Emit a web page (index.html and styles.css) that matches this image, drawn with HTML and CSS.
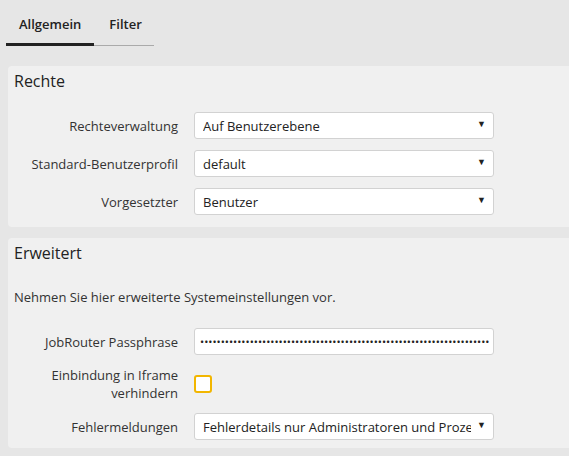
FILE: index.html
```html
<!DOCTYPE html>
<html lang="de">
<head>
    <meta charset="UTF-8">
    <title>Systemeinstellungen</title>
    <link rel="stylesheet" href="styles.css">
</head>
<body>

<div class="tabs">
    <div class="tab active">Allgemein</div>
    <div class="tab">Filter</div>
</div>

<div class="content">
    <!-- Rechte -->
    <div class="panel">
        <h3>Rechte</h3>
        <div class="rows">
            <label class="label" for="rights">Rechteverwaltung</label>
            <div class="select-wrap">
                <select id="rights">
                    <option>Auf Benutzerebene</option>
                    <option>Auf Rollenebene</option>
                </select>
            </div>

            <label class="label" for="profile">Standard-Benutzerprofil</label>
            <div class="select-wrap">
                <select id="profile">
                    <option>default</option>
                </select>
            </div>

            <label class="label" for="boss">Vorgesetzter</label>
            <div class="select-wrap">
                <select id="boss">
                    <option>Benutzer</option>
                </select>
            </div>
        </div>
    </div>

    <!-- Erweitert -->
    <div class="panel">
        <h3>Erweitert</h3>
        <p class="intro">Nehmen Sie hier erweiterte Systemeinstellungen vor.</p>
        <div class="rows">
            <label class="label" for="pass">JobRouter Passphrase</label>
            <input type="password" id="pass" value="xxxxxxxxxxxxxxxxxxxxxxxxxxxxxxxxxxxxxxxxxxxxxxxxxxxxxxxxxxxxxxxxxxxxxxxxxxxxxxxxxxxx">

            <label class="label" for="iframe">Einbindung in Iframe verhindern</label>
            <div class="check-cell">
                <input type="checkbox" id="iframe" class="check">
            </div>

            <label class="label" for="errors">Fehlermeldungen</label>
            <div class="select-wrap">
                <select id="errors">
                    <option>Fehlerdetails nur Administratoren und Prozessverantwortlichen anzeigen</option>
                </select>
            </div>
        </div>
    </div>
</div>

</body>
</html>
```

FILE: styles.css
```css
/* General Styling */
html {
    overflow: hidden;
}
body {
    font-family: 'Open Sans', sans-serif;
    font-size: 13px;
    line-height: 18px;
    background-color: #e6e6e6;
    margin: 0;
    padding: 0;
    color: #333;
}

/* Tabs */
.tabs {
    display: flex;
    align-items: flex-end;
    padding: 0 0 0 6px;
}
.tab {
    padding: 15px 13px 12px;
    font-weight: 600;
    color: #222;
    border-bottom: 1px solid #aaa;
}
.tab + .tab {
    padding-left: 15px;
    padding-right: 12px;
}
.tab.active {
    border-bottom: 3px solid #222;
    padding-bottom: 10px;
}

/* Panels */
.content {
    margin: 20px -20px 0 8px;
}
.panel {
    background-color: #f0f0f0;
    border-radius: 4px;
    padding: 4px 6px 12px;
    margin-bottom: 11px;
}
.panel + .panel {
    padding-bottom: 8px;
}
h3 {
    margin: 0;
    font-size: 16px;
    line-height: 22px;
    font-weight: normal;
    color: #222;
}
.intro {
    margin: 24px 0 22px;
}
.panel h3 + .rows {
    margin-top: 20px;
}

/* Form rows */
.rows {
    display: grid;
    grid-template-columns: 164px 300px;
    column-gap: 16px;
    row-gap: 11px;
    align-items: center;
}
.label {
    text-align: right;
}
select, input[type="password"] {
    display: block;
    width: 100%;
    height: 27px;
    box-sizing: border-box;
    margin: 0;
    border: 1px solid #d2d2d2;
    border-radius: 3px;
    background-color: #fff;
    font-family: 'Open Sans', sans-serif;
    font-size: 13px;
    color: #222;
}
select {
    appearance: none;
    -webkit-appearance: none;
    padding: 0 22px 0 8px;
}
input[type="password"] {
    padding: 0 4px 0 5px;
    font-size: 11px;
    letter-spacing: 0;
}
.select-wrap {
    position: relative;
}
.select-wrap::after {
    content: "\25BC";
    position: absolute;
    right: 8px;
    top: 6px;
    font-size: 9px;
    line-height: 12px;
    color: #222;
    pointer-events: none;
}
.check-cell {
    display: flex;
    align-items: center;
}
.check {
    appearance: none;
    -webkit-appearance: none;
    width: 18px;
    height: 18px;
    margin: 0;
    border: 2px solid #f2b600;
    border-radius: 3px;
    background-color: #fff;
}
```
